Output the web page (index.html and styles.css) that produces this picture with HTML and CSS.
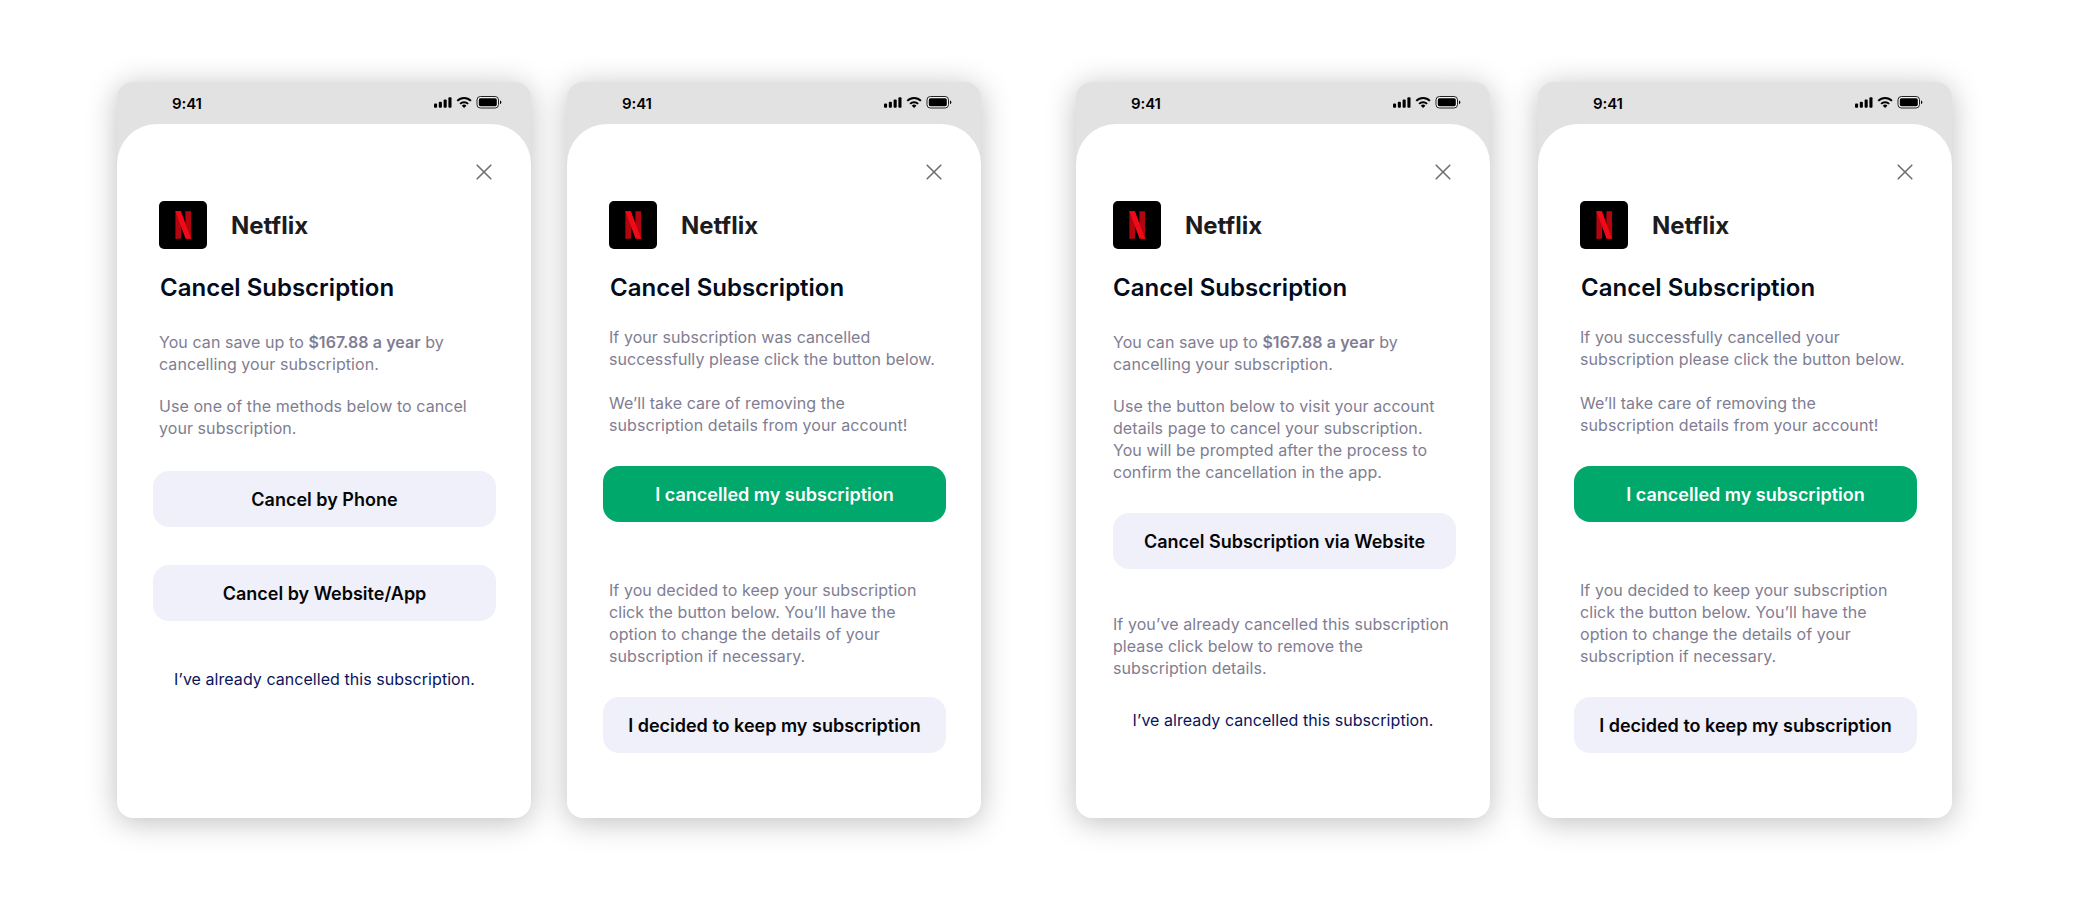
FILE: index.html
```html
<!DOCTYPE html>
<html lang="en">
<head>
<meta charset="utf-8">
<title>Cancel Subscription</title>
<link rel="stylesheet" href="styles.css">
</head>
<body>
<svg class="sprite" aria-hidden="true">
  <symbol id="status" viewBox="0 0 68 14">
    <rect x="0" y="7.6" width="3.100" height="4.200" rx="1"/>
    <rect x="4.800" y="5.700" width="3.100" height="6.100" rx="1"/>
    <rect x="9.600" y="3.400" width="3.100" height="8.400" rx="1"/>
    <rect x="14.400" y="1.200" width="3.100" height="10.600" rx="1"/>
    <g fill="none" stroke="#000" stroke-width="2">
      <path d="M23.300 4.900a9.600 9.600 0 0 1 13.600 0"/>
      <path d="M26.100 7.900a5.700 5.700 0 0 1 8 0"/>
    </g>
    <path d="M30.100 12.100l-2.300-2.400a3.300 3.300 0 0 1 4.600 0z"/>
    <rect x="43" y=".5" width="21.500" height="11.500" rx="3.400" fill="#f4f4f4" stroke="#222"/>
    <rect x="44.800" y="2.300" width="18" height="7.900" rx="1.600"/>
    <path d="M66 4.400v3.800c.8-.3 1.400-1.100 1.400-1.900s-.6-1.600-1.400-1.900z"/>
  </symbol>
  <symbol id="close" viewBox="0 0 16 16">
    <path d="M1.200 1.200l13.600 13.600M14.800 1.200L1.200 14.800" fill="none" stroke="#707070" stroke-width="1.600" stroke-linecap="round"/>
  </symbol>
  <symbol id="netflix" viewBox="0 0 48 48">
    <path d="M16.400 10.200h5.700v27.400q-2.800.1-5.700.5zM26.400 10.200h5.700v27.900q-2.800-.4-5.700-.5z" fill="#b1060f"/>
    <path d="M16.400 10.200h5.600l10.100 27.900q-2.800-.4-5.600-.5z" fill="#f00a17"/>
  </symbol>
</svg>

<main class="board">
  <section class="phone">
    <header class="status"><span class="time">9:41</span><svg class="indicators"><use href="#status"/></svg></header>
    <div class="sheet">
      <svg class="close"><use href="#close"/></svg>
      <div class="brand"><svg class="logo"><use href="#netflix"/></svg><h1 class="name">Netflix</h1></div>
      <h2 class="title title-inset">Cancel Subscription</h2>
      <p class="copy intro-low">You can save up to <b class="amount">$167.88 a year</b> by<br>cancelling your subscription.</p>
      <p class="copy next">Use one of the methods below to cancel<br>your subscription.</p>
      <button class="button first-method">Cancel by Phone</button>
      <button class="button second-method">Cancel by Website/App</button>
      <a class="link link-far">I’ve already cancelled this subscription.</a>
    </div>
  </section>

  <section class="phone">
    <header class="status"><span class="time">9:41</span><svg class="indicators"><use href="#status"/></svg></header>
    <div class="sheet">
      <svg class="close"><use href="#close"/></svg>
      <div class="brand"><svg class="logo"><use href="#netflix"/></svg><h1 class="name">Netflix</h1></div>
      <h2 class="title title-inset">Cancel Subscription</h2>
      <p class="copy intro-high">If your subscription was cancelled<br>successfully please click the button below.<br><br>We’ll take care of removing the<br>subscription details from your account!</p>
      <button class="button primary">I cancelled my subscription</button>
      <p class="copy keep">If you decided to keep your subscription<br>click the button below. You’ll have the<br>option to change the details of your<br>subscription if necessary.</p>
      <button class="button">I decided to keep my subscription</button>
    </div>
  </section>

  <section class="phone phone-website">
    <header class="status"><span class="time">9:41</span><svg class="indicators"><use href="#status"/></svg></header>
    <div class="sheet">
      <svg class="close"><use href="#close"/></svg>
      <div class="brand"><svg class="logo"><use href="#netflix"/></svg><h1 class="name">Netflix</h1></div>
      <h2 class="title">Cancel Subscription</h2>
      <p class="copy intro-low">You can save up to <b class="amount">$167.88 a year</b> by<br>cancelling your subscription.</p>
      <p class="copy next">Use the button below to visit your account<br>details page to cancel your subscription.<br>You will be prompted after the process to<br>confirm the cancellation in the app.</p>
      <button class="button">Cancel Subscription via Website</button>
      <p class="copy already">If you’ve already cancelled this subscription<br>please click below to remove the<br>subscription details.</p>
      <a class="link">I’ve already cancelled this subscription.</a>
    </div>
  </section>

  <section class="phone phone-last">
    <header class="status"><span class="time">9:41</span><svg class="indicators"><use href="#status"/></svg></header>
    <div class="sheet">
      <svg class="close"><use href="#close"/></svg>
      <div class="brand"><svg class="logo"><use href="#netflix"/></svg><h1 class="name">Netflix</h1></div>
      <h2 class="title title-inset">Cancel Subscription</h2>
      <p class="copy intro-high">If you successfully cancelled your<br>subscription please click the button below.<br><br>We’ll take care of removing the<br>subscription details from your account!</p>
      <button class="button primary">I cancelled my subscription</button>
      <p class="copy keep">If you decided to keep your subscription<br>click the button below. You’ll have the<br>option to change the details of your<br>subscription if necessary.</p>
      <button class="button">I decided to keep my subscription</button>
    </div>
  </section>
</main>
</body>
</html>
```
FILE: styles.css
```css
* { box-sizing: border-box; }

body {
  margin: 0;
  background: #fff;
  font-family: Inter, "Liberation Sans", sans-serif;
}

.sprite { display: none; }

.board {
  display: flex;
  gap: 36px;
  width: 2084px;
  height: 900px;
  padding: 82px 0 0 117px;
  overflow: hidden;
}

.phone {
  display: flex;
  flex: none;
  flex-direction: column;
  width: 414px;
  height: 736px;
  border-radius: 16px;
  background: #e2e2e2;
  box-shadow: 0 4px 30px rgba(0, 0, 0, .26);
}

.phone-website { margin-left: 59px; }
.phone-last { margin-left: 12px; }

.status {
  display: flex;
  flex: none;
  justify-content: space-between;
  height: 42px;
  padding: 12px 29px 0 55px;
}

.time {
  font-size: 15px;
  font-weight: 600;
  line-height: 20px;
  letter-spacing: -.1px;
  color: #000;
}

.indicators {
  width: 68px;
  height: 14px;
  margin-top: 2px;
}

.sheet {
  display: flex;
  flex: 1;
  flex-direction: column;
  padding: 40px 35px 0 36px;
  border-radius: 40px 40px 16px 16px;
  background: #fff;
}

.close {
  flex: none;
  align-self: flex-end;
  width: 16px;
  height: 16px;
  margin-right: 4px;
}

.brand {
  display: flex;
  flex: none;
  align-items: center;
  gap: 24px;
  margin: 21px 0 0 6px;
}

.logo {
  width: 48px;
  height: 48px;
  border-radius: 5px;
  background: #000;
}

.name {
  margin: 0;
  padding-top: 1px;
  font-size: 24px;
  font-weight: 700;
  line-height: 30px;
  color: #1c1c1e;
}

.title {
  margin: 24px 0 0 6px;
  font-size: 24px;
  font-weight: 600;
  line-height: 30px;
  white-space: nowrap;
  color: #020c1c;
}

.title-inset { margin-left: 7px; }

.copy {
  margin: 0 0 0 6px;
  font-size: 16px;
  line-height: 22px;
  letter-spacing: .07px;
  white-space: nowrap;
  color: #7f7d92;
}

.amount { font-weight: 600; }
.intro-low { margin-top: 28px; }
.intro-high { margin-top: 23px; }
.next { margin-top: 20px; }
.keep { margin-top: 57px; }
.already { margin-top: 44px; }

.button {
  flex: none;
  width: 343px;
  height: 56px;
  margin: 30px 0 0;
  padding: 2px 0 0;
  border: 0;
  border-radius: 16px;
  background: #f0f0fb;
  font: 600 18px/24px Inter, "Liberation Sans", sans-serif;
  white-space: nowrap;
  color: #050505;
}

.primary {
  background: #00a86b;
  color: #fff;
}

.first-method { margin-top: 32px; }
.second-method { margin-top: 38px; }

.link {
  margin-top: 30px;
  font-size: 16px;
  line-height: 22px;
  letter-spacing: .05px;
  text-align: center;
  white-space: nowrap;
  color: #08145c;
}

.link-far { margin-top: 47px; }

/* The website screen aligns its copy with the button edge. */
.phone-website .sheet { padding-left: 37px; }
.phone-website .brand,
.phone-website .title,
.phone-website .copy { margin-left: 0; }
.phone-website .link { margin-right: 2px; }
```
